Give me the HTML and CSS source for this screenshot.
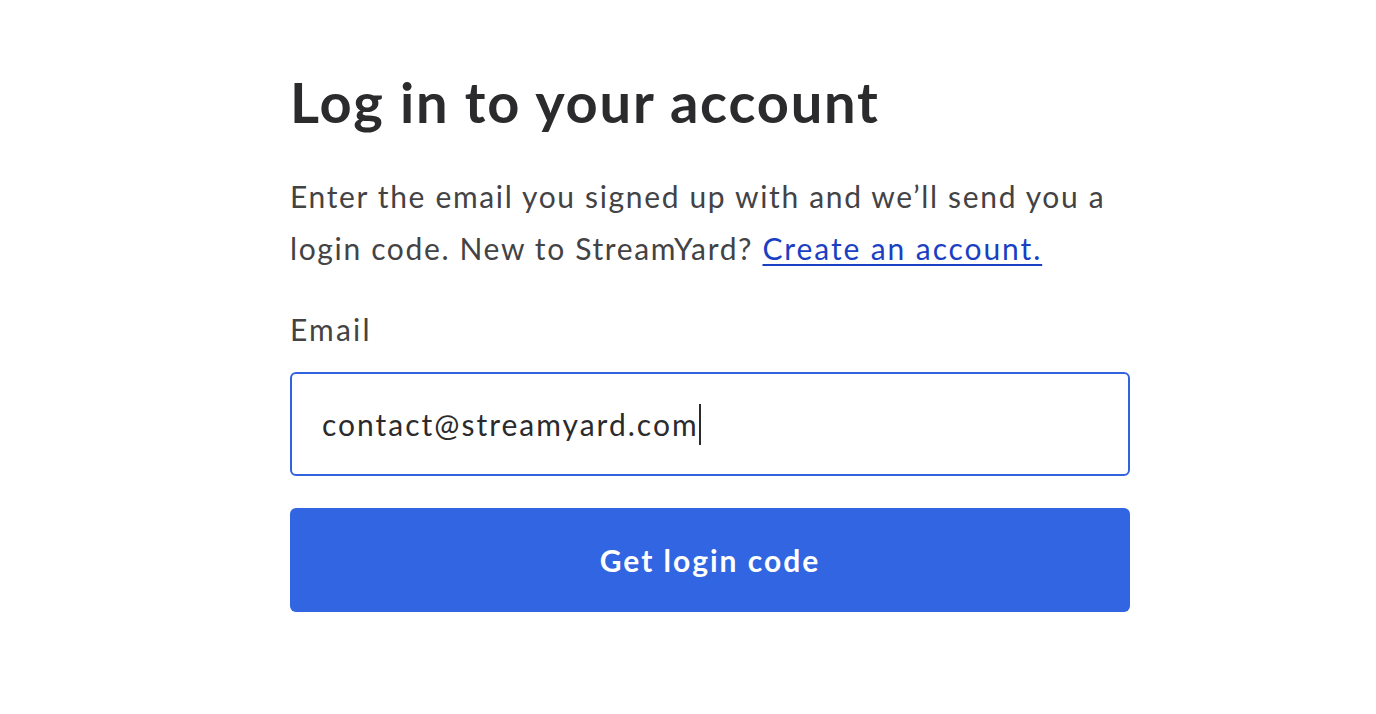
FILE: index.html
```html
<!DOCTYPE html>
<html lang="en">
<head>
<meta charset="utf-8">
<title>Log in</title>
<link rel="stylesheet" href="styles.css">
</head>
<body>
<main class="page">
  <section class="login">
    <h1 class="title">Log in to your account</h1>
    <p class="intro">Enter the email you signed up with and we’ll send you a login code. New to StreamYard? <a class="link" href="#">Create an account.</a></p>
    <label class="label" for="email">Email</label>
    <div class="field">
      <span class="value">contact@streamyard.com</span><span class="caret"></span>
    </div>
    <button class="submit" type="button">Get login code</button>
  </section>
</main>
</body>
</html>
```
FILE: styles.css
```css
html, body {
  margin: 0;
  padding: 0;
  background: #ffffff;
}
body {
  font-family: Lato, "Open Sans", sans-serif;
  color: #444446;
}
.page {
  display: flex;
  justify-content: flex-start;
  padding: 0 0 0 290px;
}
.login {
  width: 840px;
  display: flex;
  flex-direction: column;
  padding-top: 67px;
}
.title {
  margin: 0;
  font-size: 56px;
  line-height: 70px;
  font-weight: 700;
  color: #2b2b2d;
  letter-spacing: 1.8px;
}
.intro {
  margin: 33px 0 0 0;
  font-size: 30px;
  line-height: 52px;
  color: #434345;
  letter-spacing: 1.65px;
}
.link {
  color: #1a3fc3;
  text-decoration: underline;
  text-decoration-thickness: 2px;
  text-underline-offset: 4px;
  letter-spacing: 1.9px;
}
.label {
  margin-top: 35px;
  font-size: 30px;
  line-height: 40px;
  color: #434345;
  letter-spacing: 2.2px;
}
.field {
  margin-top: 23px;
  height: 100px;
  border: 2px solid #3163de;
  border-radius: 6px;
  display: flex;
  align-items: center;
  padding: 0 30px;
  box-sizing: content-box;
  font-size: 30px;
  color: #2b2b2d;
  letter-spacing: 2px;
}
.caret {
  display: inline-block;
  width: 2px;
  height: 41px;
  background: #2b2b2d;
  margin-left: 0;
}
.submit {
  margin-top: 32px;
  height: 104px;
  border: 0;
  border-radius: 6px;
  background: #3165e1;
  color: #ffffff;
  font-family: inherit;
  font-size: 30px;
  font-weight: 700;
  letter-spacing: 2px;
  cursor: pointer;
}
```
